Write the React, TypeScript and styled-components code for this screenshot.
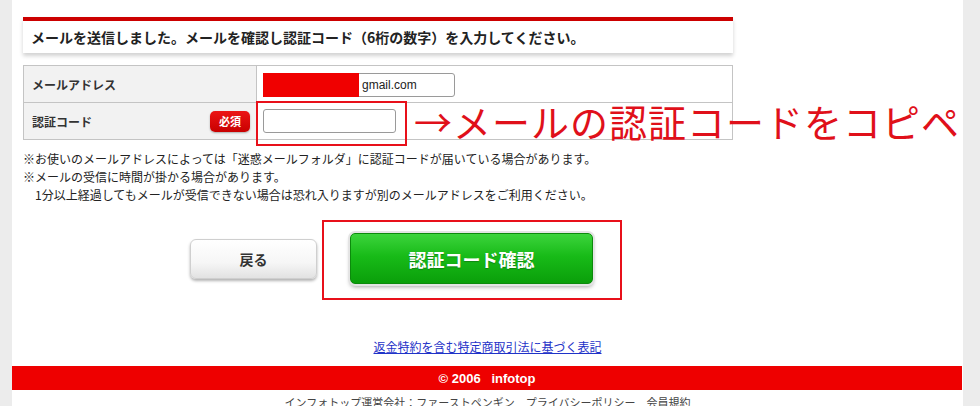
import React from 'react';
import styled, { createGlobalStyle } from 'styled-components';

const GlobalStyle = createGlobalStyle`
    html, body {
        margin: 0;
        padding: 0;
        background: #ececec;
    }
    body {
        font-family: "Noto Sans CJK JP", "Liberation Sans", sans-serif;
        color: #222;
        overflow: hidden;
    }
`;

const Container = styled.div`
    position: relative;
    margin-left: 12px;
    width: 951px;
    min-height: 406px;
    background: #fff;
`;

const Main = styled.div`
    width: 710px;
    margin-left: 11px;
    padding-top: 17px;
`;

const Notice = styled.div`
    display: flex;
    align-items: center;
    height: 32px;
    padding: 0 8px;
    border-top: 4px solid #cc0000;
    background: #fff;
    box-shadow: 0 3px 4px rgba(0, 0, 0, 0.18);
    font-size: 14px;
    font-weight: bold;
    color: #222;
`;

const Table = styled.table`
    width: 710px;
    margin-top: 12px;
    table-layout: fixed;
    border-collapse: collapse;
    border: 1px solid #c4c4c4;
`;

const Row = styled.tr`
    height: 37px;
    border-bottom: 1px solid #c4c4c4;
`;

const Label = styled.th`
    box-sizing: border-box;
    width: 233px;
    padding: 0 6px 0 8px;
    background: #f2f2f2;
    border-right: 1px solid #c4c4c4;
    text-align: left;
    font-size: 12px;
    font-weight: bold;
    color: #333;
`;

const LabelInner = styled.div`
    display: flex;
    align-items: center;
    justify-content: space-between;
`;

const Required = styled.span`
    display: inline-flex;
    align-items: center;
    justify-content: center;
    width: 40px;
    height: 21px;
    border-radius: 5px;
    background: linear-gradient(#ec1515, #c80000);
    box-shadow: 0 1px 2px rgba(0, 0, 0, 0.3);
    color: #fff;
    font-size: 11px;
    font-weight: bold;
`;

const Value = styled.td`
    padding: 0 6px;
`;

const InputWrap = styled.div`
    position: relative;
    display: inline-block;
    vertical-align: middle;
`;

const TextInput = styled.input<{ $w: number; $h: number; $indent?: number }>`
    box-sizing: border-box;
    display: block;
    width: ${p => p.$w}px;
    height: ${p => p.$h}px;
    padding: 0 4px 0 ${p => p.$indent ?? 4}px;
    border: 1px solid #9a9a9a;
    border-radius: 3px;
    background: #fff;
    font-family: "Liberation Sans", Arial, sans-serif;
    font-size: 12px;
    color: #222;
`;

const Redacted = styled.span`
    position: absolute;
    left: 0;
    top: 0;
    width: 96px;
    height: 100%;
    background: #f00000;
`;

const Notes = styled.div`
    margin-top: 10px;
    font-size: 12px;
    line-height: 18px;
    color: #222;
`;

const ButtonRow = styled.div`
    display: flex;
    align-items: center;
    gap: 33px;
    margin-top: 29px;
    padding-left: 167px;
`;

const BackButton = styled.button`
    width: 127px;
    height: 40px;
    border: 1px solid #cfcfcf;
    border-radius: 6px;
    background: linear-gradient(#ffffff, #f6f6f6 60%, #e2e2e2);
    box-shadow: 0 2px 3px rgba(0, 0, 0, 0.3);
    font-family: inherit;
    font-size: 14px;
    font-weight: bold;
    color: #333;
`;

const ConfirmButton = styled.button`
    width: 243px;
    height: 51px;
    border: 1px solid #0c8a0c;
    border-radius: 5px;
    background: linear-gradient(#3cd43c 0%, #18bb18 45%, #0a9f0a 100%);
    box-shadow: 0 0 0 2px #e4e4e4, 0 3px 4px rgba(0, 0, 0, 0.35);
    font-family: inherit;
    font-size: 18px;
    font-weight: bold;
    color: #fff;
    text-shadow: 0 1px 1px rgba(0, 0, 0, 0.25);
`;

const LinkLine = styled.div`
    margin-top: 54px;
    text-align: center;
    font-size: 12px;
    line-height: 18px;
`;

const Link = styled.a`
    color: #1f33c8;
    text-decoration: underline;
`;

const Footer = styled.div`
    margin-top: 10px;
    height: 24px;
    width: 950px;
    display: flex;
    align-items: center;
    justify-content: center;
    background: #ee0000;
    color: #fff;
    font-family: "Liberation Sans", Arial, sans-serif;
    font-size: 13px;
    font-weight: bold;
    white-space: pre;
`;

const SubFooter = styled.div`
    margin-top: 4px;
    text-align: center;
    font-size: 11px;
    line-height: 16px;
    color: #444;
`;

const Mark = styled.div<{ $x: number; $y: number; $w: number; $h: number }>`
    position: absolute;
    left: ${p => p.$x}px;
    top: ${p => p.$y}px;
    width: ${p => p.$w}px;
    height: ${p => p.$h}px;
    box-sizing: border-box;
    border: 2px solid #e8101a;
    pointer-events: none;
`;

const Callout = styled.div`
    position: absolute;
    left: 402px;
    top: 98px;
    font-size: 38px;
    letter-spacing: 1px;
    line-height: 46px;
    color: #e0101a;
    white-space: nowrap;
`;

export default function App() {
    return (
        <>
            <GlobalStyle />
            <Container>
                <Main>
                    <Notice>メールを送信しました。メールを確認し認証コード（6桁の数字）を入力してください。</Notice>
                    <Table>
                        <tbody>
                            <Row>
                                <Label>メールアドレス</Label>
                                <Value>
                                    <InputWrap>
                                        <TextInput $w={192} $h={24} $indent={98} defaultValue="gmail.com" readOnly />
                                        <Redacted />
                                    </InputWrap>
                                </Value>
                            </Row>
                            <Row>
                                <Label>
                                    <LabelInner>
                                        認証コード
                                        <Required>必須</Required>
                                    </LabelInner>
                                </Label>
                                <Value>
                                    <TextInput $w={133} $h={24} />
                                </Value>
                            </Row>
                        </tbody>
                    </Table>
                    <Notes>
                        ※お使いのメールアドレスによっては「迷惑メールフォルダ」に認証コードが届いている場合があります。<br />
                        ※メールの受信に時間が掛かる場合があります。<br />
                        {'\u3000'}1分以上経過してもメールが受信できない場合は恐れ入りますが別のメールアドレスをご利用ください。
                    </Notes>
                    <ButtonRow>
                        <BackButton>戻る</BackButton>
                        <ConfirmButton>認証コード確認</ConfirmButton>
                    </ButtonRow>
                </Main>
                <LinkLine>
                    <Link href="#">返金特約を含む特定商取引法に基づく表記</Link>
                </LinkLine>
                <Footer>{'© 2006   infotop'}</Footer>
                <SubFooter>インフォトップ運営会社：ファーストペンギン　プライバシーポリシー　会員規約</SubFooter>

                <Mark $x={244} $y={101} $w={151} $h={45} />
                <Mark $x={310} $y={220} $w={300} $h={80} />
                <Callout>→メールの認証コードをコピペ</Callout>
            </Container>
        </>
    );
}
